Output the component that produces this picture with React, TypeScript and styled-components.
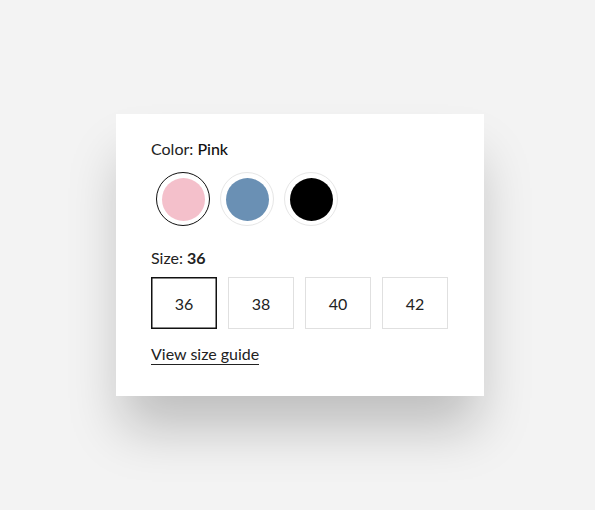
import React, { useState } from "react";
import styled, { createGlobalStyle } from "styled-components";

const Global = createGlobalStyle`
  html, body { margin: 0; padding: 0; background: #f3f3f3; }
  body { font-family: "Lato", "Open Sans", sans-serif; color: #222; }
`;

const Page = styled.div`
  min-height: 510px;
  box-sizing: border-box;
  padding-left: 5px;
  display: flex;
  align-items: center;
  justify-content: center;
`;

const Card = styled.div`
  width: 368px;
  height: 282px;
  box-sizing: border-box;
  background: #fff;
  padding: 25px 35px 0 35px;
  box-shadow: 0 38px 50px -6px rgba(0, 0, 0, 0.22);
  display: flex;
  flex-direction: column;
`;

const Label = styled.div<{ $mt?: number }>`
  font-size: 16px;
  line-height: 20px;
  margin-top: ${(p) => p.$mt ?? 0}px;
  color: #222;
  strong { font-weight: 700; }
`;

const Value = styled.span`
  font-weight: 500;
  color: #111;
`;

const SwatchRow = styled.div`
  display: flex;
  gap: 10px;
  margin-top: 13px;
  margin-left: 5px;
`;

const Swatch = styled.button<{ $color: string; $active: boolean }>`
  width: 54px;
  height: 54px;
  border-radius: 50%;
  box-sizing: border-box;
  padding: 0;
  background: #fff;
  border: ${(p) => (p.$active ? "1.5px solid #111" : "1.5px solid #e6e6e6")};
  display: flex;
  align-items: center;
  justify-content: center;
  cursor: pointer;
  &::after {
    content: "";
    width: 43px;
    height: 43px;
    border-radius: 50%;
    background: ${(p) => p.$color};
  }
`;

const SizeRow = styled.div`
  display: flex;
  gap: 11px;
  margin-top: 9px;
`;

const SizeBox = styled.button<{ $active: boolean }>`
  width: 66px;
  height: 52px;
  box-sizing: border-box;
  background: #fff;
  border: 1px solid ${(p) => (p.$active ? "#111" : "#e0e0e0")};
  ${(p) => p.$active && "box-shadow: inset 0 0 0 0.5px #111;"}
  font-family: "Lato", "Open Sans", sans-serif;
  font-size: 16px;
  color: #222;
  cursor: pointer;
  padding: 0;
`;

const GuideLink = styled.a`
  align-self: flex-start;
  margin-top: 15px;
  font-size: 16px;
  line-height: 20px;
  color: #222;
  text-decoration: none;
  border-bottom: 1.5px solid #222;
`;

const colors = [
  { name: "Pink", value: "#f4c0cb" },
  { name: "Blue", value: "#6a90b4" },
  { name: "Black", value: "#000000" },
];
const sizes = ["36", "38", "40", "42"];

export default function App() {
  const [color, setColor] = useState("Pink");
  const [size, setSize] = useState("36");
  return (
    <>
      <Global />
      <Page>
        <Card>
          <Label>
            Color: <Value>{color}</Value>
          </Label>
          <SwatchRow>
            {colors.map((c) => (
              <Swatch
                key={c.name}
                aria-label={c.name}
                $color={c.value}
                $active={c.name === color}
                onClick={() => setColor(c.name)}
              />
            ))}
          </SwatchRow>
          <Label $mt={22}>
            Size: <strong>{size}</strong>
          </Label>
          <SizeRow>
            {sizes.map((s) => (
              <SizeBox key={s} $active={s === size} onClick={() => setSize(s)}>
                {s}
              </SizeBox>
            ))}
          </SizeRow>
          <GuideLink href="#">View size guide</GuideLink>
        </Card>
      </Page>
    </>
  );
}
